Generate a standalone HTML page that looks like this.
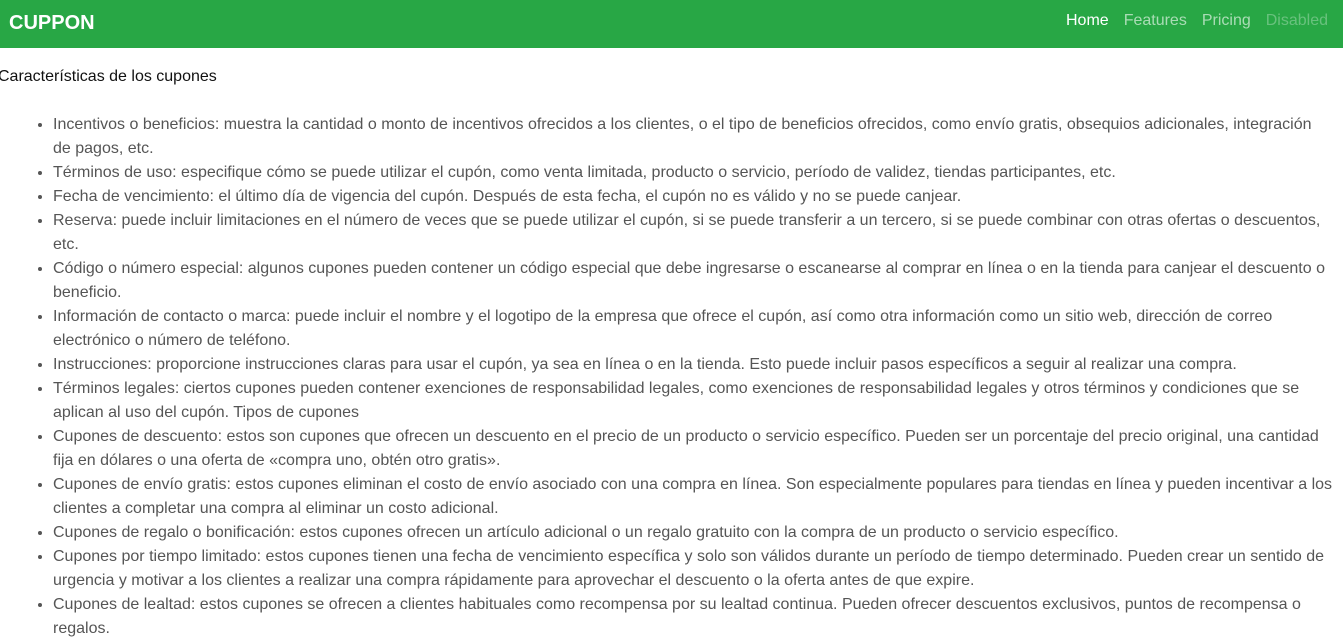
<!DOCTYPE html>
<html><head><meta charset="utf-8"><style>
body{margin:0;font-family:"Liberation Sans",Arial,sans-serif;background:#fff;width:1343px;height:621px;overflow:hidden}
nav{height:48px;background:#28a745;position:relative}
.brand{position:absolute;left:9px;top:11px;color:#fff;font-weight:bold;font-size:20px;line-height:24px}
.links{position:absolute;right:15px;top:10px;font-size:16px;line-height:22px}
.links span{margin-left:15px;color:rgba(255,255,255,.6)}
.links span.a{color:#fff}
.links span.d{color:rgba(255,255,255,.3)}
h1{font-weight:normal;font-size:16px;line-height:24px;margin:0;position:absolute;left:-2px;top:65px;color:#111}
ul{position:absolute;top:113px;left:0;margin:0;padding-left:53px;font-size:16px;line-height:24px;color:#555;white-space:nowrap}
li::marker{color:#555}
</style></head><body>
<nav><div class="brand">CUPPON</div><div class="links"><span class="a">Home</span><span>Features</span><span>Pricing</span><span class="d">Disabled</span></div></nav>
<h1>Características de los cupones</h1>
<ul>
<li>Incentivos o beneficios: muestra la cantidad o monto de incentivos ofrecidos a los clientes, o el tipo de beneficios ofrecidos, como envío gratis, obsequios adicionales, integración<br>de pagos, etc.</li>
<li>Términos de uso: especifique cómo se puede utilizar el cupón, como venta limitada, producto o servicio, período de validez, tiendas participantes, etc.</li>
<li>Fecha de vencimiento: el último día de vigencia del cupón. Después de esta fecha, el cupón no es válido y no se puede canjear.</li>
<li>Reserva: puede incluir limitaciones en el número de veces que se puede utilizar el cupón, si se puede transferir a un tercero, si se puede combinar con otras ofertas o descuentos,<br>etc.</li>
<li>Código o número especial: algunos cupones pueden contener un código especial que debe ingresarse o escanearse al comprar en línea o en la tienda para canjear el descuento o<br>beneficio.</li>
<li>Información de contacto o marca: puede incluir el nombre y el logotipo de la empresa que ofrece el cupón, así como otra información como un sitio web, dirección de correo<br>electrónico o número de teléfono.</li>
<li>Instrucciones: proporcione instrucciones claras para usar el cupón, ya sea en línea o en la tienda. Esto puede incluir pasos específicos a seguir al realizar una compra.</li>
<li>Términos legales: ciertos cupones pueden contener exenciones de responsabilidad legales, como exenciones de responsabilidad legales y otros términos y condiciones que se<br>aplican al uso del cupón. Tipos de cupones</li>
<li>Cupones de descuento: estos son cupones que ofrecen un descuento en el precio de un producto o servicio específico. Pueden ser un porcentaje del precio original, una cantidad<br>fija en dólares o una oferta de «compra uno, obtén otro gratis».</li>
<li>Cupones de envío gratis: estos cupones eliminan el costo de envío asociado con una compra en línea. Son especialmente populares para tiendas en línea y pueden incentivar a los<br>clientes a completar una compra al eliminar un costo adicional.</li>
<li>Cupones de regalo o bonificación: estos cupones ofrecen un artículo adicional o un regalo gratuito con la compra de un producto o servicio específico.</li>
<li>Cupones por tiempo limitado: estos cupones tienen una fecha de vencimiento específica y solo son válidos durante un período de tiempo determinado. Pueden crear un sentido de<br>urgencia y motivar a los clientes a realizar una compra rápidamente para aprovechar el descuento o la oferta antes de que expire.</li>
<li>Cupones de lealtad: estos cupones se ofrecen a clientes habituales como recompensa por su lealtad continua. Pueden ofrecer descuentos exclusivos, puntos de recompensa o<br>regalos.</li>
</ul>
</body></html>
